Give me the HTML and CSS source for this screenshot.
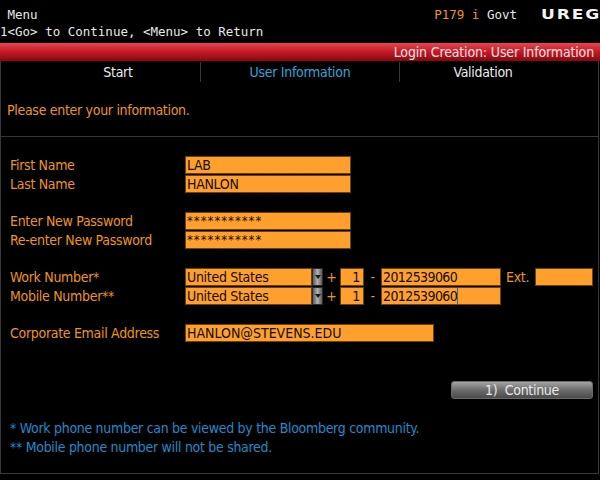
FILE: index.html
```html
<!DOCTYPE html>
<html lang="en">
<head>
  <meta charset="UTF-8">
  <meta name="viewport" content="width=device-width, initial-scale=1.0">
  <title>UREG - Login Creation</title>
  <link rel="stylesheet" href="styles.css">
</head>
<body>

<header class="topbar">
  <div class="topline">
    <span class="menu"> Menu</span>
    <span class="cmd"><span class="amber">P179 i</span> Govt</span>
    <span class="ticker">UREG</span>
  </div>
  <div class="hint">1&lt;Go&gt; to Continue, &lt;Menu&gt; to Return</div>
</header>

<div class="titlebar">Login Creation: User Information</div>

<main class="panel">
  <nav class="tabs">
    <span class="tab">Start</span>
    <span class="tab active">User Information</span>
    <span class="tab">Validation</span>
  </nav>

  <p class="intro">Please enter your information.</p>

  <form class="form">
    <div class="group">
      <div class="row">
        <label class="label">First Name</label>
        <span class="field name">LAB</span>
      </div>
      <div class="row">
        <label class="label">Last Name</label>
        <span class="field name">HANLON</span>
      </div>
    </div>

    <div class="group">
      <div class="row">
        <label class="label">Enter New Password</label>
        <span class="field name secret">***********</span>
      </div>
      <div class="row">
        <label class="label">Re-enter New Password</label>
        <span class="field name secret">***********</span>
      </div>
    </div>

    <div class="group">
      <div class="row">
        <label class="label">Work Number*</label>
        <span class="field country">United States</span>
        <span class="drop"></span>
        <span class="sep">+</span>
        <span class="field code">1</span>
        <span class="sep">-</span>
        <span class="field phone">2012539060</span>
        <span class="ext-label">Ext.</span>
        <span class="field ext"></span>
      </div>
      <div class="row">
        <label class="label">Mobile Number**</label>
        <span class="field country">United States</span>
        <span class="drop"></span>
        <span class="sep">+</span>
        <span class="field code">1</span>
        <span class="sep">-</span>
        <span class="field phone">2012539060<span class="caret"></span></span>
      </div>
    </div>

    <div class="group">
      <div class="row">
        <label class="label">Corporate Email Address</label>
        <span class="field email">HANLON@STEVENS.EDU</span>
      </div>
    </div>

    <div class="actions">
      <button type="button" class="continue">1)&nbsp;&nbsp;Continue</button>
    </div>
  </form>

  <div class="notes">
    <p>* Work phone number can be viewed by the Bloomberg community.</p>
    <p>** Mobile phone number will not be shared.</p>
  </div>
</main>

</body>
</html>
```

FILE: styles.css
```css
body {
  margin: 0;
  width: 600px;
  height: 480px;
  overflow: hidden;
  background-color: #000;
  color: #e6e6e6;
  font-family: "DejaVu Sans Condensed", "DejaVu Sans", sans-serif;
  font-stretch: condensed;
  font-size: 14px;
  letter-spacing: -0.3px;
}

p {
  margin: 0;
}

.topbar {
  padding-top: 6px;
  margin-bottom: 3px;
  font-family: "DejaVu Sans Mono", monospace;
  font-stretch: normal;
  font-size: 12.5px;
  letter-spacing: 0;
  line-height: 17px;
  color: #e8e8e8;
}

.topline {
  display: flex;
  height: 17px;
}

.menu,
.hint {
  white-space: pre;
}

.cmd {
  margin-left: auto;
  white-space: pre;
}

.amber {
  color: #f0960e;
}

.ticker {
  margin-left: 24px;
  width: 59px;
  font-family: "DejaVu Sans", sans-serif;
  font-weight: bold;
  font-size: 14px;
  letter-spacing: 1.5px;
  color: #f2f2f2;
  transform: scaleX(1.22);
  transform-origin: left center;
}

.titlebar {
  height: 18px;
  line-height: 18px;
  padding-right: 6px;
  text-align: right;
  letter-spacing: -0.15px;
  color: #f6e4e4;
  background: linear-gradient(#e84652, #c81c28 45%, #8a0610);
}

.panel {
  box-sizing: border-box;
  width: 599px;
  height: 413px;
  border: 1px solid #383838;
  border-top: none;
}

.tabs {
  display: grid;
  grid-template-columns: 164px 200px 166px;
  padding-left: 35px;
  height: 20px;
  line-height: 22px;
}

.tab {
  text-align: center;
  color: #ececec;
}

.tab.active {
  color: #2aa6dc;
  border-left: 1px solid #383838;
  border-right: 1px solid #383838;
  margin: 1px 0 2px;
  line-height: 20px;
}

.intro {
  padding: 20px 6px 17px;
  line-height: 18px;
  color: #f0960e;
  border-bottom: 1px solid #383838;
}

.form {
  padding: 19px 0 0 9px;
  display: flex;
  flex-direction: column;
  gap: 19px;
}

.group {
  display: flex;
  flex-direction: column;
  gap: 1px;
}

.row {
  display: flex;
  align-items: center;
  height: 18px;
}

.label {
  width: 175px;
  color: #f0960e;
}

.field {
  box-sizing: border-box;
  height: 18px;
  line-height: 16px;
  padding: 0 1px;
  background-color: #ffa02e;
  border: 1px solid #6e4208;
  color: #140c00;
  white-space: pre;
}

.name {
  width: 166px;
}

.secret {
  font-size: 13px;
  letter-spacing: 1px;
}

.country {
  width: 127px;
}

.drop {
  box-sizing: border-box;
  width: 11px;
  height: 18px;
  border: 1px solid #2a2a2a;
  background: linear-gradient(90deg, #5a5a5a, #b0b0b0 50%, #5a5a5a);
  display: flex;
  align-items: center;
  justify-content: center;
}

.drop::after {
  content: "";
  border-left: 3px solid transparent;
  border-right: 3px solid transparent;
  border-top: 4px solid #1a1a1a;
}

.sep {
  width: 17px;
  text-align: center;
  color: #f0960e;
}

.code {
  width: 24px;
  text-align: right;
  padding-right: 3px;
}

.phone {
  width: 120px;
  letter-spacing: -0.6px;
}

.caret {
  display: inline-block;
  width: 1px;
  height: 16px;
  vertical-align: top;
  background-color: #3c6890;
}

.ext-label {
  margin-left: 5px;
  width: 29px;
  color: #f0960e;
}

.ext {
  width: 58px;
}

.email {
  width: 249px;
  letter-spacing: 0;
}

.actions {
  display: flex;
  justify-content: flex-end;
  padding-right: 5px;
  margin-top: 20px;
}

.continue {
  box-sizing: border-box;
  width: 142px;
  height: 18px;
  padding: 0;
  border: 1px solid #6a6a6a;
  border-radius: 3px;
  background: linear-gradient(#a4a4a4, #6c6c6c 50%, #4a4a4a);
  color: #e8e8e8;
  font-family: inherit;
  font-stretch: condensed;
  font-size: 14px;
  letter-spacing: -0.3px;
  line-height: 16px;
}

.notes {
  padding: 20px 9px 0;
  line-height: 19px;
  color: #1e8ccc;
}
```
